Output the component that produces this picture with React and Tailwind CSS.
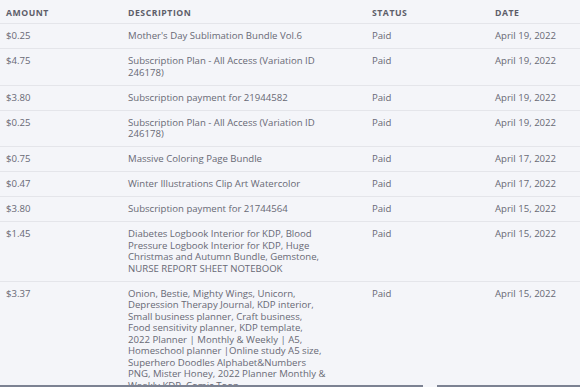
import React from "react";

const rows = [
  ["$0.25", ["Mother's Day Sublimation Bundle Vol.6"], "April 19, 2022"],
  ["$4.75", ["Subscription Plan - All Access (Variation ID", "246178)"], "April 19, 2022"],
  ["$3.80", ["Subscription payment for 21944582"], "April 19, 2022"],
  ["$0.25", ["Subscription Plan - All Access (Variation ID", "246178)"], "April 19, 2022"],
  ["$0.75", ["Massive Coloring Page Bundle"], "April 17, 2022"],
  ["$0.47", ["Winter Illustrations Clip Art Watercolor"], "April 17, 2022"],
  ["$3.80", ["Subscription payment for 21744564"], "April 15, 2022"],
  [
    "$1.45",
    [
      "Diabetes Logbook Interior for KDP, Blood",
      "Pressure Logbook Interior for KDP, Huge",
      "Christmas and Autumn Bundle, Gemstone,",
      "NURSE REPORT SHEET NOTEBOOK",
    ],
    "April 15, 2022",
  ],
  [
    "$3.37",
    [
      "Onion, Bestie, Mighty Wings, Unicorn,",
      "Depression Therapy Journal, KDP interior,",
      "Small business planner, Craft business,",
      "Food sensitivity planner, KDP template,",
      "2022 Planner | Monthly & Weekly | A5,",
      "Homeschool planner |Online study A5 size,",
      "Superhero Doodles Alphabet&Numbers",
      "PNG, Mister Honey, 2022 Planner Monthly &",
      "Weekly KDP, Comic Toon",
    ],
    "April 15, 2022",
  ],
];

export default function App() {
  return (
    <div
      className="relative h-[387px] w-[580px] overflow-hidden bg-[#f4f5f9] text-[#686975]"
      style={{ fontFamily: "'Open Sans', 'Liberation Sans', sans-serif" }}
    >
      <div className="grid grid-cols-[122px_244px_123px_1fr] border-b border-[#e4e5ea] text-[8.7px] font-bold uppercase tracking-[0.06em] text-[#5d5e69]">
        <div className="pl-[6px] pt-[7.5px] pb-[5.5px] leading-[10px]">Amount</div>
        <div className="pl-[6px] pt-[7.5px] pb-[5.5px] leading-[10px]">Description</div>
        <div className="pl-[6px] pt-[7.5px] pb-[5.5px] leading-[10px]">Status</div>
        <div className="pl-[6px] pt-[7.5px] pb-[5.5px] leading-[10px]">Date</div>
      </div>
      {rows.map((r, i) => (
        <div
          key={i}
          className="grid grid-cols-[122px_244px_123px_1fr] border-b border-[#e4e5ea] text-[9.6px] leading-[11.5px]"
        >
          <div className="pl-[6px] py-[6.25px]">{r[0]}</div>
          <div className="pl-[6px] py-[6.25px] whitespace-nowrap">
            {r[1].map((line, j) => (
              <div key={j}>{line}</div>
            ))}
          </div>
          <div className="pl-[6px] py-[6.25px]">Paid</div>
          <div className="pl-[6px] py-[6.25px]">{r[2]}</div>
        </div>
      ))}
      <div className="absolute bottom-0 left-0 right-0 flex h-[2px] gap-[14px]">
        <div className="w-[423px] bg-[#7c8292]" />
        <div className="flex-1 bg-[#7c8292]" />
      </div>
    </div>
  );
}
